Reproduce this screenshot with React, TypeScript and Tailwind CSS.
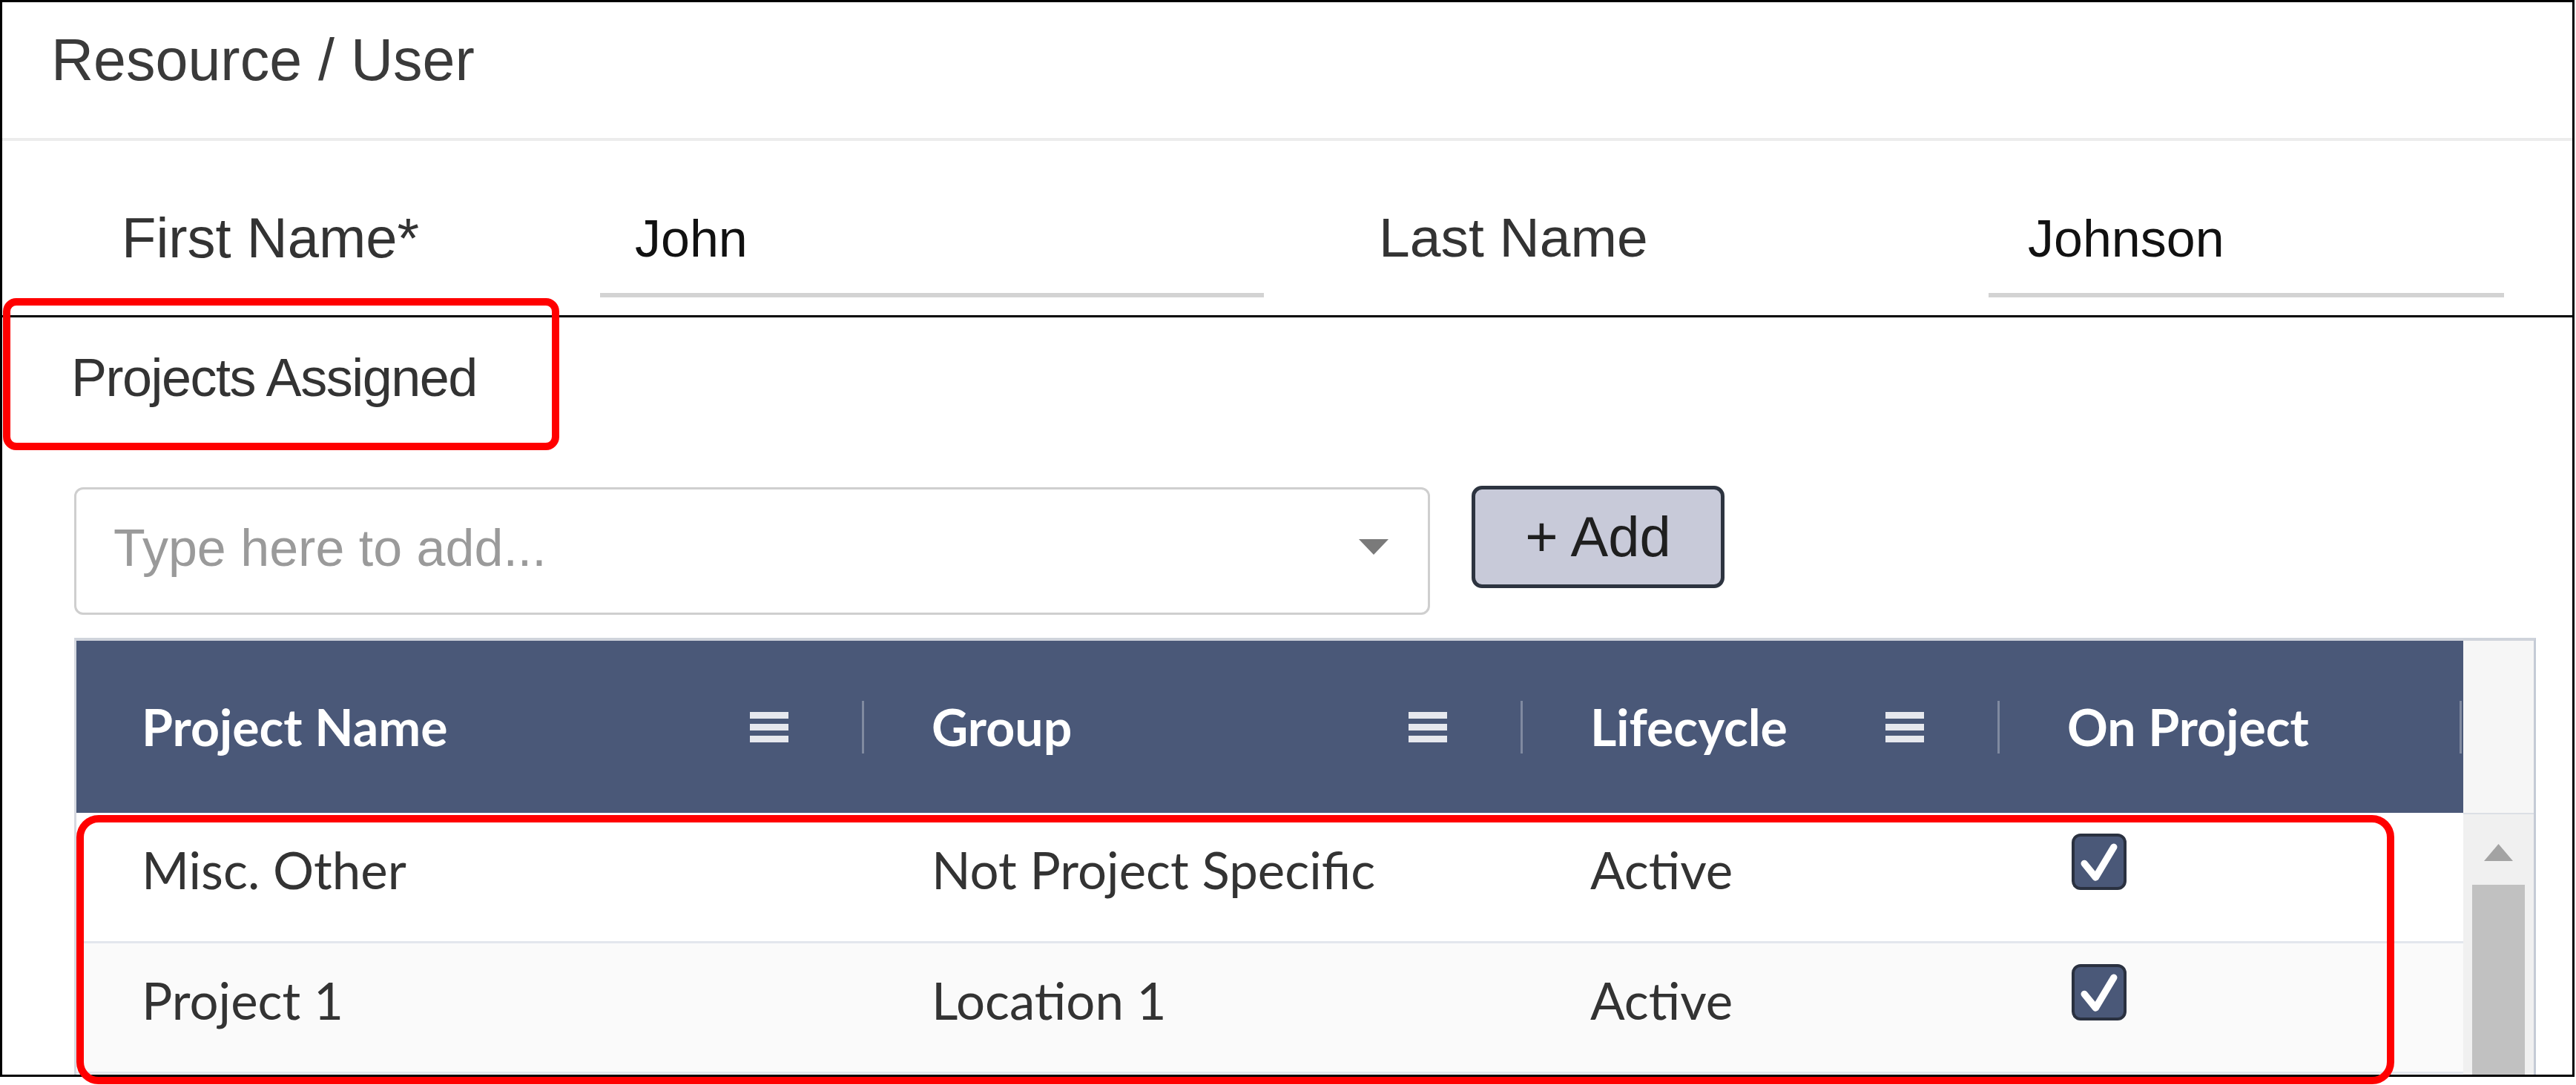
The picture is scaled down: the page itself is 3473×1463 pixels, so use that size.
import React from "react";

const headerCols = [
  { label: "Project Name", w: "w-[1059px]", pl: "pl-[88px]", icon: true },
  { label: "Group", w: "w-[885px]", pl: "pl-[91px]", icon: true },
  { label: "Lifecycle", w: "w-[640px]", pl: "pl-[91px]", icon: true },
  { label: "On Project", w: "w-[620px]", pl: "pl-[91px]", icon: false },
];

const rows = [
  { name: "Misc. Other", group: "Not Project Specific", lifecycle: "Active", on: true },
  { name: "Project 1", group: "Location 1", lifecycle: "Active", on: true },
];

function MenuIcon() {
  return (
    <div className="flex flex-col gap-[7px]">
      <div className="h-[9px] w-[52px] bg-[#e6e8ee]" />
      <div className="h-[9px] w-[52px] bg-[#e6e8ee]" />
      <div className="h-[9px] w-[52px] bg-[#e6e8ee]" />
    </div>
  );
}

function Check() {
  return (
    <div className="flex h-[76px] w-[74px] items-center justify-center rounded-[12px] border-[4px] border-[#2a3140] bg-[#4a5878]">
      <svg width="56" height="60" viewBox="0 0 24 24" fill="none">
        <path d="M3.5 13 L10 21 L20.5 3.5" stroke="white" strokeWidth="4" strokeLinecap="round" strokeLinejoin="round" />
      </svg>
    </div>
  );
}

function Sep() {
  return <div className="h-[71px] w-[3px] bg-white/30" />;
}

export default function App() {
  return (
    <div className="relative h-[1463px] w-[3473px] overflow-hidden bg-white font-['Liberation_Sans',Arial,sans-serif]">
      <div className="flex h-[1452px] w-[3471px] flex-col overflow-hidden border-[3px] border-black">
        {/* title */}
        <div className="h-[187px] shrink-0 border-b-[4px] border-[#ececec] pl-[66px] pt-[38px]">
          <div className="text-[79px] leading-none text-[#3a3a3a]">Resource / User</div>
        </div>

        {/* name fields */}
        <div className="flex h-[238px] shrink-0 items-start border-b-[3px] border-black pt-[93px]">
          <div className="ml-[161px] w-[645px] text-[76px] leading-none text-[#333]">First Name*</div>
          <div className="h-[118px] w-[895px] border-b-[6px] border-[#d3d3d3] pl-[47px]">
            <div className="mt-[4px] text-[70px] leading-none text-[#111]">John</div>
          </div>
          <div className="ml-[155px] w-[822px] text-[75px] leading-none text-[#333]">Last Name</div>
          <div className="h-[118px] w-[695px] border-b-[6px] border-[#d3d3d3] pl-[53px]">
            <div className="mt-[4px] text-[70px] leading-none text-[#111]">Johnson</div>
          </div>
        </div>

        {/* projects */}
        <div className="flex min-h-0 flex-1 flex-col">
          <div className="ml-[93px] mt-[45px] text-[72px] leading-none tracking-[-1.5px] text-[#333]">
            Projects Assigned
          </div>

          <div className="ml-[97px] mt-[110px] flex items-start">
            <div className="mt-[2px] flex h-[172px] w-[1828px] items-start rounded-[12px] border-[3px] border-[#cfcfcf] pl-[50px]">
              <div className="mt-[44px] text-[70px] leading-none text-[#9a9a9a]">Type here to add...</div>
              <svg className="ml-auto mr-[53px] mt-[67px]" width="40" height="21" viewBox="0 0 40 21">
                <polygon points="0,0 40,0 20,21" fill="#7a7a7a" />
              </svg>
            </div>
            <div className="ml-[56px] flex h-[138px] w-[341px] items-center justify-center rounded-[14px] border-[5px] border-[#2d3440] bg-[#c8cad9]">
              <span className="text-[76px] leading-none text-[#1f1f1f]">+ Add</span>
            </div>
          </div>

          <div className="ml-[97px] mt-[31px] flex min-h-0 w-[3319px] flex-1 flex-col overflow-hidden border-l-[3px] border-r-[3px] border-t-[4px] border-l-[#d6d9e0] border-r-[#c5cbd6] border-t-[#cfd3db] font-['Lato',sans-serif]">
            {/* header */}
            <div className="flex h-[232px] shrink-0">
              <div className="flex w-[3218px] items-center bg-[#4a5878]">
                {headerCols.map((c) => (
                  <React.Fragment key={c.label}>
                    <div className={`flex h-full items-center ${c.w} ${c.pl}`}>
                      <span className="text-[68px] font-bold leading-none text-white">{c.label}</span>
                      {c.icon && (
                        <div className="ml-auto mr-[99px]">
                          <MenuIcon />
                        </div>
                      )}
                    </div>
                    <Sep />
                  </React.Fragment>
                ))}
              </div>
              <div className="w-[95px] bg-[#f6f6f6]" />
            </div>

            {/* body */}
            <div className="flex min-h-0 flex-1">
              <div className="flex w-[3218px] flex-col">
                {rows.map((r, i) => (
                  <div
                    key={r.name}
                    className={`flex h-[176px] shrink-0 border-b-[3px] border-[#e3e6ed] text-[69px] leading-none text-[#333] ${
                      i % 2 === 1 ? "bg-[#fafafa]" : "bg-white"
                    }`}
                  >
                    <div className="w-[1062px] pl-[88px] pt-[42px]">{r.name}</div>
                    <div className="w-[888px] pl-[91px] pt-[42px]">{r.group}</div>
                    <div className="w-[643px] pl-[91px] pt-[42px]">{r.lifecycle}</div>
                    <div className="flex-1 pl-[97px] pt-[28px]">{r.on && <Check />}</div>
                  </div>
                ))}
              </div>
              <div className="flex w-[95px] flex-col items-center border-t-[2px] border-[#dcdfe5] bg-[#f0f0f0]">
                <svg className="mt-[40px]" width="39" height="23" viewBox="0 0 39 23">
                  <polygon points="19.5,0 39,23 0,23" fill="#a3a3a3" />
                </svg>
                <div className="mt-[32px] w-[71px] flex-1 bg-[#c1c1c1]" />
              </div>
            </div>
          </div>
        </div>
      </div>

      {/* annotation boxes */}
      <div className="absolute left-[4px] top-[402px] h-[205px] w-[750px] rounded-[18px] border-[10px] border-[#ff0000]" />
      <div className="absolute left-[103px] top-[1099px] h-[363px] w-[3125px] rounded-[30px] border-[10px] border-[#ff0000]" />
    </div>
  );
}
